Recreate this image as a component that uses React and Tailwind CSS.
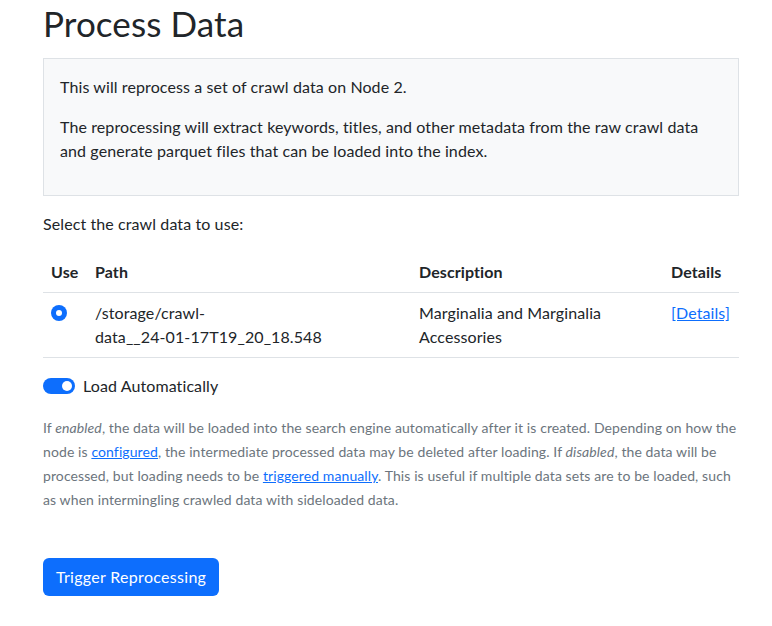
import React, { useState } from 'react';

const rows = [
    {
        path: ['/storage/crawl-', 'data__24-01-17T19_20_18.548'],
        description: 'Marginalia and Marginalia Accessories',
    },
];

function App() {
    const [selected, setSelected] = useState(0);
    const [autoLoad, setAutoLoad] = useState(true);

    return (
        <div className="min-h-screen bg-white text-[#212529] text-[16px] leading-6 tracking-[0.1px]" style={{ fontFamily: 'Lato, "Open Sans", sans-serif' }}>
            <div className="px-[43px] w-[782px]">
                <h1 className="text-[35px] leading-[41px] font-normal pt-[3px] mb-[14px]">Process Data</h1>

                <div className="border border-[#dee2e6] bg-[#f8f9fa] p-4 w-[696px]">
                    <p className="mb-4">This will reprocess a set of crawl data on Node 2.</p>
                    <p className="mb-4">
                        The reprocessing will extract keywords, titles, and other metadata from the raw crawl data
                        and generate parquet files that can be loaded into the index.
                    </p>
                </div>

                <p className="mt-4 mb-4">Select the crawl data to use:</p>

                <table className="w-[696px] table-fixed border-collapse mb-4">
                    <thead>
                        <tr className="border-b border-[#dee2e6] text-left">
                            <th className="w-[44px] p-2 font-bold">Use</th>
                            <th className="w-[324px] p-2 font-bold">Path</th>
                            <th className="w-[252px] p-2 font-bold">Description</th>
                            <th className="w-[76px] p-2 font-bold">Details</th>
                        </tr>
                    </thead>
                    <tbody>
                        {rows.map((row, i) => (
                            <tr key={row.path.join('')} className="border-b border-[#dee2e6] align-top">
                                <td className="p-2">
                                    <button
                                        onClick={() => setSelected(i)}
                                        className={`mt-1 w-4 h-4 rounded-full flex items-center justify-center ${selected === i ? 'bg-[#0d6efd]' : 'border border-[#dee2e6]'}`}
                                    >
                                        {selected === i && <span className="w-[6px] h-[6px] rounded-full bg-white" />}
                                    </button>
                                </td>
                                <td className="p-2">
                                    <span className="block">{row.path[0]}</span>
                                    <span className="block">{row.path[1]}</span>
                                </td>
                                <td className="p-2 pr-[60px]">{row.description}</td>
                                <td className="p-2">
                                    <a href="#" className="text-[#0d6efd] underline">[Details]</a>
                                </td>
                            </tr>
                        ))}
                    </tbody>
                </table>

                <div className="flex items-center gap-2 mb-4">
                    <button
                        onClick={() => setAutoLoad(!autoLoad)}
                        className={`w-8 h-4 rounded-full flex items-center px-[3px] ${autoLoad ? 'bg-[#0d6efd] justify-end' : 'bg-white border border-[#dee2e6] justify-start'}`}
                    >
                        <span className={`w-[10px] h-[10px] rounded-full ${autoLoad ? 'bg-white' : 'bg-[#adb5bd]'}`} />
                    </button>
                    <label>Load Automatically</label>
                </div>

                <p className="text-[#6c757d] w-[696px] pt-[2px]">
                    <small className="block text-[14px] leading-6">
                        If <em>enabled</em>, the data will be loaded into the search engine automatically after it is created. Depending on how the
                        node is <a href="#" className="text-[#0d6efd] underline">configured</a>, the intermediate processed data may be deleted after loading. If <em>disabled</em>, the data will be
                        processed, but loading needs to be <a href="#" className="text-[#0d6efd] underline">triggered manually</a>. This is useful if multiple data sets are to be loaded, such
                        as when intermingling crawled data with sideloaded data.
                    </small>
                </p>

                <button className="mt-[46px] bg-[#0d6efd] text-white rounded-md px-[13px] py-[7px] leading-6 tracking-[0.3px]">
                    Trigger Reprocessing
                </button>
            </div>
        </div>
    );
}

export default App;
